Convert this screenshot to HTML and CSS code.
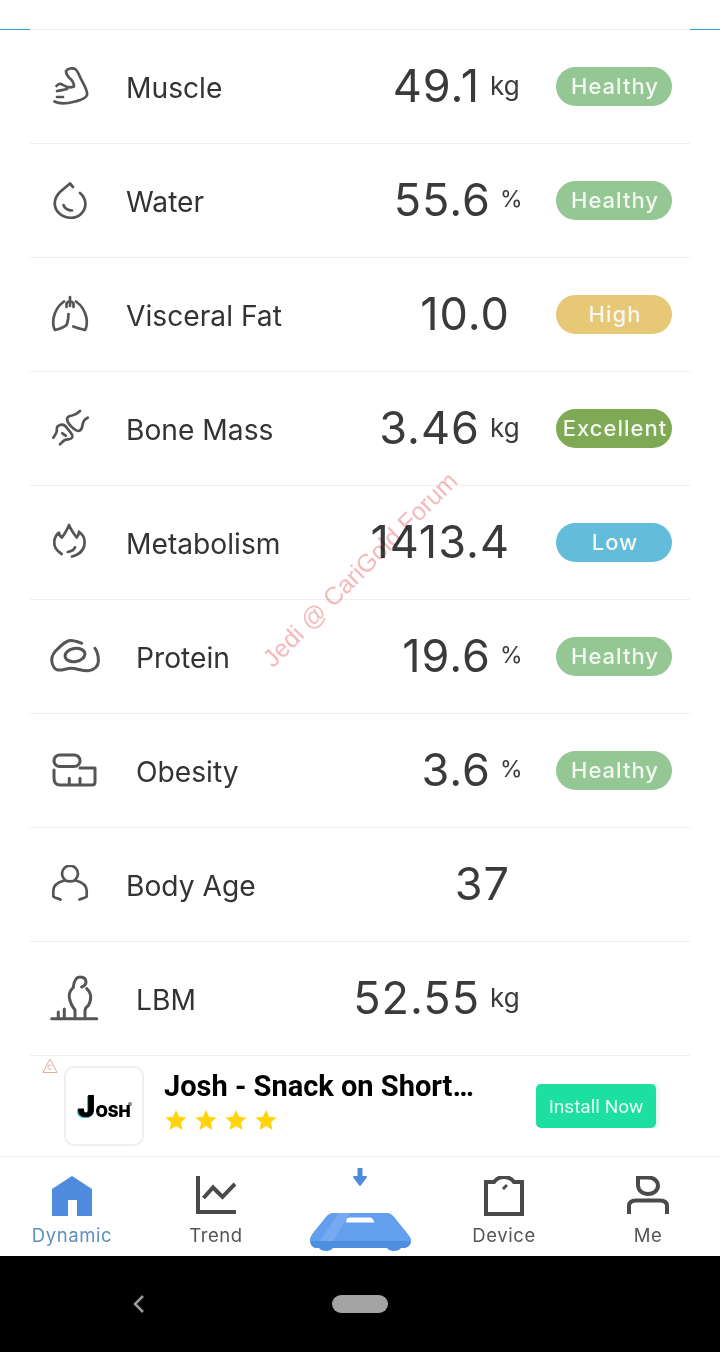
FILE: index.html
```html
<!DOCTYPE html>
<html lang="en">
<head>
    <meta charset="UTF-8">
    <meta name="viewport" content="width=device-width, initial-scale=1.0">
    <title>Body Composition</title>
    <link rel="stylesheet" href="styles.css">
</head>
<body>
    <div class="page">
        <div class="top-rule"><span class="top-tab"></span><span class="top-tab"></span></div>

        <div class="metrics">
            <div class="metric">
                <svg class="metric-icon" viewBox="0 0 40 40"><path d="M16 4C18 1.500 22 0.500 25 2C28 4 29 8 31 12C34 18 38 24 37 28C36 32 30 33 25 34.500C18 36.500 10 37.500 4.500 34.500M16 4C16 7 17 9 19.500 11C22 13 24 16 24 19.500C20 21 16 20 13 18C10 16 8 17 6.500 19M7 24C11 23 14 23 17 22M7 30H13"/></svg>
                <span class="metric-name">Muscle</span>
                <span class="metric-value">49.1</span>
                <span class="metric-unit">kg</span>
                <span class="pill healthy">Healthy</span>
            </div>
            <div class="metric">
                <svg class="metric-icon" viewBox="0 0 40 40"><path d="M23 6L20 2.500L10 11C3 18 3 27 10 33C16 38 26 38 31 33C37 27 37 18 30 12M13.500 24C14 27 18 29.500 22 29.500"/></svg>
                <span class="metric-name">Water</span>
                <span class="metric-value">55.6</span>
                <span class="metric-unit percent">%</span>
                <span class="pill healthy">Healthy</span>
            </div>
            <div class="metric">
                <svg class="metric-icon" viewBox="0 0 40 40"><path d="M20 2V11M16.500 12V8.500C17 7 19 6.500 20 6.500C21 6.500 23 7 23.500 8.500V12M14 6.500C9 10 5 16 3.500 23C3 27 3 32 5 35C9 34 13 33 16.700 30C18 26 18.500 22 18.500 19M26 6.500C31 10 35 16 36.500 23C37 27 37 32 35 35C31 34 27 33 23.300 31.500"/></svg>
                <span class="metric-name">Visceral Fat</span>
                <span class="metric-value bare">10.0</span>
                <span class="pill high">High</span>
            </div>
            <div class="metric">
                <svg class="metric-icon" viewBox="0 0 40 40"><path d="M30 2C27 5 25 6 22 6.500C18 7 16 9 17.700 12.700C19 16 21 17 23.300 19.300C26 22 30 24 32 18.500C33 14 33 11 37.700 8.700M3.300 28.700C5 26 6 25 6.700 22.700C7 20 6 17 9 16.500C12 15 15 16 17 19C19 22 23 25 22.300 28C21.500 31 18 30 15 31C13 32 12 33.500 10 35.300M12.300 24.300L15.700 26.700"/></svg>
                <span class="metric-name">Bone Mass</span>
                <span class="metric-value">3.46</span>
                <span class="metric-unit">kg</span>
                <span class="pill excellent">Excellent</span>
            </div>
            <div class="metric">
                <svg class="metric-icon" viewBox="0 0 40 40"><path d="M11.700 31C7 28 3.500 24 4.300 18C5 14 7 11 9 9.700C9 12 10 13 11.700 14.500C14 12 17 7 19 2C21 7 24 11 26.700 14.500C28 13 29 11 29 8.700C32 11 34.500 14 34.500 18C35 25 31 31 22 33.500M17.700 29C21 28.500 24 27 25 24.300"/></svg>
                <span class="metric-name">Metabolism</span>
                <span class="metric-value bare">1413.4</span>
                <span class="pill low">Low</span>
            </div>
            <div class="metric">
                <svg class="metric-icon wide" viewBox="0 0 50 40"><path d="M31.700 6.300C27 4.500 22 2.500 18 4C13 6 11 9 8.300 11.300C5 14 1.700 19 1.700 23C2 29 5 33 8.300 33C13 33.500 17 31 21.700 31.300C27 31.500 32 34 38.300 33.700C44 33.500 48.300 29 48.300 24.700C48.500 20 47 14 45 11.300"/><ellipse cx="25" cy="18" rx="10" ry="6.500" transform="rotate(-10 25 18)"/></svg>
                <span class="metric-name">Protein</span>
                <span class="metric-value">19.6</span>
                <span class="metric-unit percent">%</span>
                <span class="pill healthy">Healthy</span>
            </div>
            <div class="metric">
                <svg class="metric-icon wide" viewBox="0 0 50 40"><rect x="4" y="4" width="26" height="11.500" rx="5.700"/><path d="M4 19V27Q4 34 10 34H42Q45 34 45 31V17H30M19.300 27.300V34M30 27.300V34"/></svg>
                <span class="metric-name">Obesity</span>
                <span class="metric-value">3.6</span>
                <span class="metric-unit percent">%</span>
                <span class="pill healthy">Healthy</span>
            </div>
            <div class="metric">
                <svg class="metric-icon" viewBox="0 0 40 40"><path d="M14.500 14.500A8 8 0 1 1 25.500 14.500C24 17 16 17 14.500 14.500ZM14.500 15.500C8 17 3.300 20 3.300 26V31.500C5 33 8 33.500 10.500 34.500M25.500 15.500C32 17 36.700 20 36.700 26V31.500C35 33 32 33.500 29.500 34.500"/></svg>
                <span class="metric-name">Body Age</span>
                <span class="metric-value bare">37</span>
                <span class="pill none"></span>
            </div>
            <div class="metric">
                <svg class="metric-icon wide tall" viewBox="0 0 50 50"><path d="M1.700 44.800H46.700M8.300 44.800V38M14.300 44.800V35M23.300 13.500C24 6 27 3 30 3C34 3 36 5 36 8C36 11 33 12.500 31.700 13M23.300 13.500C20.500 16 19 20 19.300 23.200C20 28 21 31 25 36V43M36.700 14.500C39 17 41 20 40.700 23.200C40.500 27 39.500 30 38.300 31.500C36 33 35 35 35 37V43"/></svg>
                <span class="metric-name">LBM</span>
                <span class="metric-value">52.55</span>
                <span class="metric-unit">kg</span>
                <span class="pill none"></span>
            </div>
        </div>

        <div class="ad">
            <svg class="ad-mark" viewBox="0 0 16 16"><path d="M8 1L15 14.500H1Z"/><path class="ad-mark-c" d="M9.500 7.500A2.200 2.200 0 1 0 9.500 11"/></svg>
            <div class="ad-logo">
                <span class="josh-j">J</span><span class="josh-text">OSH</span><span class="josh-reg">®</span>
            </div>
            <div class="ad-body">
                <div class="ad-title">Josh - Snack on Short…</div>
                <div class="ad-stars">
                    <svg viewBox="0 0 24 24"><polygon points="12,1 15.300,8.500 23.500,9.300 17.300,14.700 19.100,22.800 12,18.600 4.900,22.800 6.700,14.700 0.500,9.300 8.700,8.500"/></svg>
                    <svg viewBox="0 0 24 24"><polygon points="12,1 15.300,8.500 23.500,9.300 17.300,14.700 19.100,22.800 12,18.600 4.900,22.800 6.700,14.700 0.500,9.300 8.700,8.500"/></svg>
                    <svg viewBox="0 0 24 24"><polygon points="12,1 15.300,8.500 23.500,9.300 17.300,14.700 19.100,22.800 12,18.600 4.900,22.800 6.700,14.700 0.500,9.300 8.700,8.500"/></svg>
                    <svg viewBox="0 0 24 24"><polygon points="12,1 15.300,8.500 23.500,9.300 17.300,14.700 19.100,22.800 12,18.600 4.900,22.800 6.700,14.700 0.500,9.300 8.700,8.500"/></svg>
                </div>
            </div>
            <button class="ad-button">Install Now</button>
        </div>

        <nav class="tabs">
            <div class="tab active">
                <svg class="tab-icon" viewBox="0 0 40 40"><path d="M20 0L40 13V40H25V24H16V40H0V13Z"/></svg>
                <span class="tab-label">Dynamic</span>
            </div>
            <div class="tab">
                <svg class="tab-icon" viewBox="0 0 40 40"><path class="line" d="M2 0V36H40"/><path class="line" d="M7.500 22L17 11.500L26.500 21L39 8"/></svg>
                <span class="tab-label">Trend</span>
            </div>
            <div class="tab scale-tab">
                <svg class="scale-arrow" viewBox="0 0 16 20"><path d="M6.500 2H9.500V10H14L8 18L2 10H6.500Z"/></svg>
                <svg class="scale" viewBox="0 0 102 40">
                    <path class="scale-base" d="M1 28C1 24 3 22 5 19L18 3C20 1 22 0 25 0H77C80 0 82 1 84 3L97 19C99 22 102 24 102 28C102 31 100 34 96 35H92C90 39 80 39 78 35H24C22 39 12 39 10 35H6C3 34 1 31 1 28Z"/>
                    <path class="scale-top" d="M5 19L18 3C20 1 22 0 25 0H77C80 0 82 1 84 3L97 19C99 22 101 24 102 28H1C1 24 3 22 5 19Z"/>
                    <path class="scale-shine" d="M30 0H41L24 28H11Z"/>
                    <path class="scale-window" d="M38 5.500C38 5.500 39 4.500 41 4.500H61C63 4.500 64 6 65.500 9.500H37Z"/>
                </svg>
            </div>
            <div class="tab">
                <svg class="tab-icon" viewBox="0 0 40 40"><path class="line" d="M2 6H10C13 2 17 1 20 1C24 1 28 3 30 6H38V38H2Z"/><path class="line thin" d="M19 13L23 9"/></svg>
                <span class="tab-label">Device</span>
            </div>
            <div class="tab">
                <svg class="tab-icon me-icon" viewBox="0 0 42 40"><path class="line" d="M11 1.500H21C28 1.500 31 6 31 9.500C31 15 26 18 21 18C15 18 11 14 11 9ZM2 38V30C2 26 5 24.500 9 24.500H33C37 24.500 40 26 40 30V38"/></svg>
                <span class="tab-label">Me</span>
            </div>
        </nav>

        <div class="system-bar">
            <svg class="system-back" viewBox="0 0 14 20"><path d="M11 2L3 10L11 18"/></svg>
            <span class="system-home"></span>
        </div>

        <div class="watermark">Jedi @ CariGold Forum</div>
    </div>
</body>
</html>
```

FILE: styles.css
```css
* {
    box-sizing: border-box;
}

body {
    margin: 0;
    font-family: Inter, 'Noto Sans', sans-serif;
    background-color: white;
}

.page {
    position: relative;
    width: 720px;
    height: 1352px;
    overflow: hidden;
    background: white;
    display: flex;
    flex-direction: column;
}

.top-rule {
    height: 30px;
    display: flex;
    justify-content: space-between;
    align-items: flex-end;
    background: linear-gradient(#eeeeee, #eeeeee) bottom / 100% 1px no-repeat;
}

.top-tab {
    width: 30px;
    height: 1px;
    background-color: #2f9fd8;
}

.metrics {
    margin: 0 30px;
}

.metric {
    height: 114px;
    padding: 0 18px 0 20px;
    display: flex;
    align-items: center;
    border-bottom: 1px solid #eeeeee;
}

.metric-icon {
    width: 40px;
    height: 40px;
    flex-shrink: 0;
    fill: none;
    stroke: #555555;
    stroke-width: 2.700;
    stroke-linecap: round;
    stroke-linejoin: round;
}

.metric-icon.wide {
    width: 50px;
    stroke-width: 3;
}

.metric-icon.tall {
    height: 50px;
}

.metric-name {
    margin-left: 36px;
    margin-top: 2px;
    font-size: 28.200px;
    color: #333333;
    flex: 1;
}

.metric-value {
    font-size: 45px;
    color: #3a3a3a;
    letter-spacing: 1px;
    margin-top: -2px;
}

.metric-value.bare {
    margin-right: 46px;
}

.metric-unit {
    width: 30px;
    margin-left: 10px;
    margin-right: 36px;
    font-size: 26px;
    color: #3a3a3a;
    margin-top: -3px;
}

.metric-unit.percent {
    font-size: 23px;
    margin-left: 9px;
    margin-right: 28px;
    width: 28px;
}

.pill {
    width: 116px;
    height: 39px;
    padding-left: 2px;
    border-radius: 20px;
    color: #f4f8f2;
    font-size: 22px;
    font-weight: 500;
    letter-spacing: 1px;
    display: flex;
    align-items: center;
    justify-content: center;
    margin-top: -1px;
}

.healthy { background-color: #95c795; }
.high { background-color: #e6c877; }
.excellent { background-color: #80a955; }
.low { background-color: #63bcd9; }
.none { background: transparent; }

.ad {
    position: relative;
    height: 101px;
    padding: 10px 0 0 64px;
    display: flex;
    align-items: flex-start;
    border-bottom: 1px solid #eeeeee;
}

.ad-mark {
    position: absolute;
    left: 42px;
    top: 2px;
    width: 16px;
    height: 16px;
    fill: none;
    stroke: #dcb19c;
    stroke-width: 1;
}

.ad-logo {
    position: relative;
    width: 80px;
    height: 80px;
    flex-shrink: 0;
    border: 2px solid #eeeeee;
    border-radius: 10px;
    display: flex;
    align-items: baseline;
    justify-content: center;
    color: black;
    font-weight: 900;
    padding-top: 20px;
}

.josh-j {
    font-size: 30px;
    text-shadow: -1px 1px 0 #2fb6d8;
}

.josh-text {
    font-size: 16px;
}

.josh-reg {
    position: absolute;
    left: 62px;
    top: 33px;
    font-size: 6px;
    font-weight: 400;
}

.ad-body {
    margin-left: 20px;
    width: 372px;
}

.ad-title {
    font-family: Roboto, sans-serif;
    font-size: 29px;
    font-weight: 700;
    color: black;
    margin-top: 3px;
}

.ad-stars {
    display: flex;
    gap: 8px;
    margin-top: 6px;
    margin-left: 1px;
}

.ad-stars svg {
    width: 22px;
    height: 22px;
    fill: #ffd408;
}

.ad-button {
    width: 120px;
    height: 44px;
    margin-top: 18px;
    border: none;
    border-radius: 5px;
    background-color: #1de0a0;
    color: #e8fbf3;
    font-family: Roboto, sans-serif;
    font-size: 19px;
    box-shadow: 4px 0 0 #eafaf4;
}

.tabs {
    height: 99px;
    display: flex;
}

.tab {
    width: 144px;
    display: flex;
    flex-direction: column;
    align-items: center;
    padding-top: 19px;
}

.tab-icon {
    width: 40px;
    height: 40px;
    fill: #4f8bdc;
}

.me-icon {
    width: 42px;
}

.tab .line {
    fill: none;
    stroke: #4a4a4a;
    stroke-width: 4;
}

.tab .line.thin {
    stroke-width: 3;
}

.tab-label {
    margin-top: 8px;
    font-size: 18.500px;
    color: #555555;
    letter-spacing: 0.600px;
}

.tab.active .tab-label {
    color: #5f8fbd;
}

.scale-tab {
    padding-top: 10px;
}

.scale-arrow {
    width: 16px;
    height: 20px;
    fill: #4f8bdc;
    stroke: #4f8bdc;
    stroke-width: 2;
    stroke-linejoin: round;
}

.scale {
    width: 102px;
    height: 40px;
    margin-top: 26px;
}

.scale-base { fill: #4f8fe0; }
.scale-top { fill: #649fee; }
.scale-shine { fill: #78aaf0; }
.scale-window { fill: white; }

.system-bar {
    flex: 1;
    background: black;
    display: flex;
    align-items: center;
    justify-content: center;
    position: relative;
}

.system-back {
    position: absolute;
    left: 132px;
    top: 38px;
    width: 14px;
    height: 20px;
    fill: none;
    stroke: #9a9a9a;
    stroke-width: 2.500;
}

.system-home {
    width: 56px;
    height: 18px;
    border-radius: 9px;
    background-color: #a3a3a3;
}

.watermark {
    position: absolute;
    left: 220px;
    top: 555px;
    width: 280px;
    text-align: center;
    font-family: 'Liberation Sans', sans-serif;
    font-size: 25px;
    color: #f3b9bb;
    transform: rotate(-45deg);
    white-space: nowrap;
    mix-blend-mode: multiply;
}
```
